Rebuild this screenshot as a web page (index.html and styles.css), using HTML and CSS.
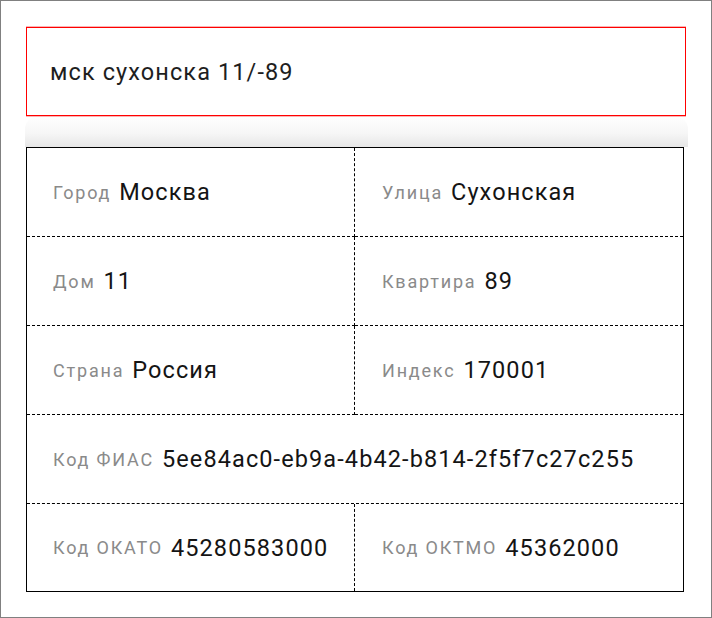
FILE: index.html
```html
<!DOCTYPE html>
<html lang="ru">
<head>
    <meta charset="UTF-8">
    <title>Адрес</title>
    <link rel="stylesheet" href="styles.css">
</head>
<body>
    <div class="page">
        <!-- Строка поиска адреса -->
        <div class="search">мск сухонска 11/-89</div>

        <div class="shade"></div>

        <!-- Разобранный адрес -->
        <div class="address">
            <div class="cell"><span class="label">Город</span><span class="value">Москва</span></div>
            <div class="cell"><span class="label">Улица</span><span class="value">Сухонская</span></div>
            <div class="cell"><span class="label">Дом</span><span class="value">11</span></div>
            <div class="cell"><span class="label">Квартира</span><span class="value">89</span></div>
            <div class="cell"><span class="label">Страна</span><span class="value">Россия</span></div>
            <div class="cell"><span class="label">Индекс</span><span class="value">170001</span></div>
            <div class="cell wide"><span class="label">Код ФИАС</span><span class="value">5ee84ac0-eb9a-4b42-b814-2f5f7c27c255</span></div>
            <div class="cell last"><span class="label">Код ОКАТО</span><span class="value">45280583000</span></div>
            <div class="cell last"><span class="label">Код ОКТМО</span><span class="value">45362000</span></div>
        </div>
    </div>
</body>
</html>
```

FILE: styles.css
```css
html, body { margin: 0; padding: 0; background: #fff; }
body { font-family: Roboto, "Noto Sans", sans-serif; }
.page { box-sizing: border-box; width: 712px; height: 618px; border: 1px solid #808080; padding: 26px 25px 0 25px; }
.search { display: flex; align-items: center; box-sizing: border-box; width: 660px; height: 89px; border: 1px solid #ff0000; box-shadow: 0 -1px 0 #fbb4b4, 0 1px 0 #fbb4b4; padding: 0 0 0 23px; font-size: 23.5px; letter-spacing: 1.1px; color: #1e1e1e; background: #fff; }
.shade { height: 30px; margin: 1px -2px 0 -1px; background: linear-gradient(to bottom, #fefefe 0%, #f6f6f6 55%, #e6e6e6 100%); border-radius: 12px 12px 0 0; }
.address { width: 658px; box-sizing: border-box; border: 1px solid #000; display: grid; grid-template-columns: 328px 328px; }
.cell { display: flex; align-items: center; height: 88px; padding: 0 0 0 26px; border-bottom: 1px dashed #000; white-space: nowrap; }
.cell:nth-child(odd) { border-right: 1px dashed #000; }
.cell:nth-child(even) { padding-left: 27px; }
.cell.wide { grid-column: 1 / 3; border-right: none; }
.cell.last { border-bottom: none; height: 87px; }
.cell.last:nth-child(8) { border-right: 1px dashed #000; padding-left: 26px; }
.cell.last:nth-child(9) { border-right: none; padding-left: 27px; }
.label { font-size: 18px; letter-spacing: 1.8px; color: #8a8a8a; margin-right: 8px; }
.value { font-size: 23.5px; letter-spacing: 1.1px; color: #141414; }
```
